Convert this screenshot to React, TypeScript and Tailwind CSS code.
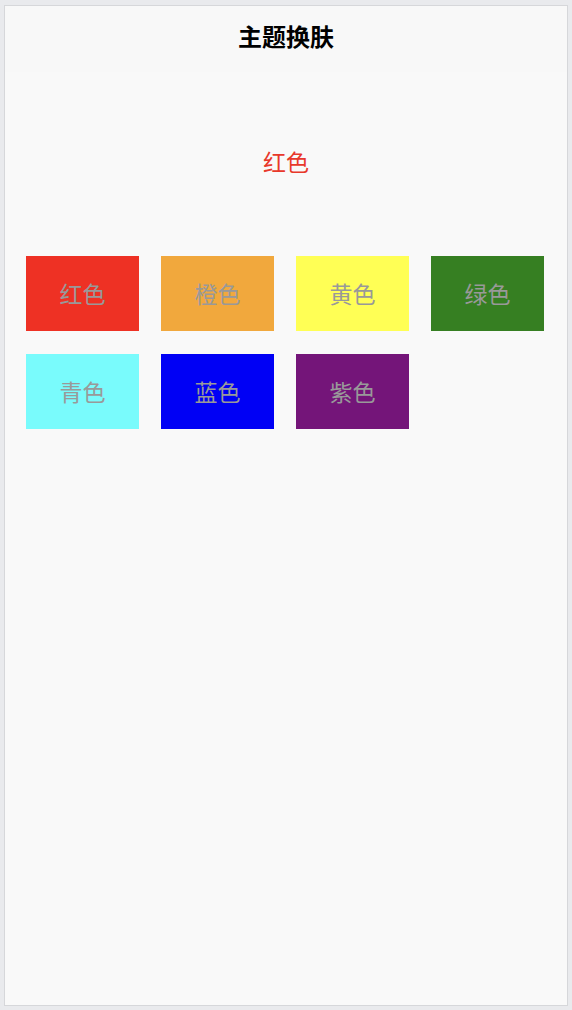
import React, { useState } from "react";

const themes = [
  { name: "红色", bg: "bg-[#ee3124]", text: "text-[#e8382b]" },
  { name: "橙色", bg: "bg-[#f1a83d]", text: "text-[#f1a83d]" },
  { name: "黄色", bg: "bg-[#ffff55]", text: "text-[#d6d62a]" },
  { name: "绿色", bg: "bg-[#367f22]", text: "text-[#367f22]" },
  { name: "青色", bg: "bg-[#79fbfc]", text: "text-[#3bc8c9]" },
  { name: "蓝色", bg: "bg-[#0000f5]", text: "text-[#0000f5]" },
  { name: "紫色", bg: "bg-[#741579]", text: "text-[#741579]" },
];

const font = "font-['Noto_Sans_CJK_SC',sans-serif]";

export default function App() {
  const [current, setCurrent] = useState(0);
  const theme = themes[current];

  return (
    <div className={`w-[572px] h-[1010px] bg-[#e9eaed] pt-[5px] pb-[4px] px-[4px] ${font}`}>
      <div className="h-full bg-[#f9f9f9] border border-[#d6d7da] flex flex-col">
        <header className="h-[66px] flex items-center justify-center bg-[#f8f8f8]">
          <h1 className="text-[24px] font-bold text-black leading-none -mt-[6px]">主题换肤</h1>
        </header>
        <div className="flex justify-center mt-[78px]">
          <span className={`text-[23px] leading-none ${theme.text}`}>{theme.name}</span>
        </div>
        <div className="grid grid-cols-[113px_113px_113px_113px] gap-x-[22px] gap-y-[23px] mt-[83px] pl-[21px]">
          {themes.map((t, i) => (
            <button
              key={t.name}
              onClick={() => setCurrent(i)}
              className={`h-[75px] flex items-center justify-center text-[23px] text-[#999999] ${t.bg}`}
            >
              {t.name}
            </button>
          ))}
        </div>
      </div>
    </div>
  );
}
